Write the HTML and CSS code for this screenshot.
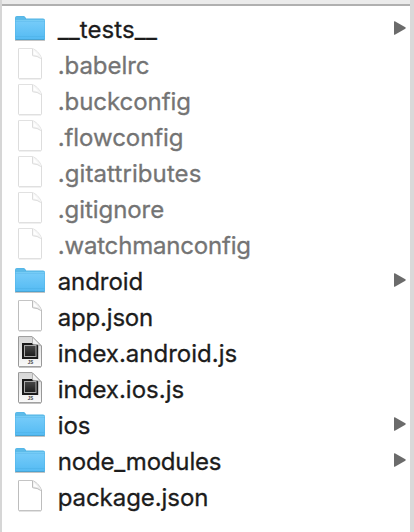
FILE: index.html
```
<!DOCTYPE html>
<html lang="en">
<head>
<meta charset="utf-8">
<title>Files</title>
<link rel="stylesheet" href="styles.css">
</head>
<body>
<svg width="0" height="0" class="defs">
  <defs>
    <linearGradient id="blue" x1="0" y1="0" x2="0" y2="1"><stop offset="0" stop-color="#75cbf9"/><stop offset="1" stop-color="#55bbf3"/></linearGradient>
    <linearGradient id="paper" x1="0" y1="0" x2="0" y2="1"><stop offset="0" stop-color="#d6d6d6"/><stop offset="1" stop-color="#fafafa"/></linearGradient>
    <linearGradient id="dark" x1="0" y1="0" x2="0" y2="1"><stop offset="0" stop-color="#484848"/><stop offset="1" stop-color="#1c1c1c"/></linearGradient>
    <symbol id="folder" viewBox="0 0 32 36">
      <path d="M1 28.500h30" stroke="#c4c4c4" stroke-width="1"/>
      <path d="M1 27V6q0-2 2-2h6.500q1 0 1.700 1l1 1.500H29q2 0 2 2V27q0 1-1 1H2q-1 0-1-1z" fill="#50b3e6"/>
      <path d="M1.500 8V6q0-1.500 1.500-1.500h6.500L11.500 7H29q1.500 0 1.500 1.500z" fill="#5dbbe9"/>
      <path d="M1.500 9.500h29V26q0 1-1 1h-27q-1 0-1-1z" fill="url(#blue)"/>
      <path d="M1.500 8.700h29" stroke="#8ad8fb" stroke-width=".8"/>
      <path d="M1.500 24.500h29" stroke="#4eb2e8" stroke-width=".6"/>
      <path d="M1.500 27.500h29" stroke="#48a3d2"/>
    </symbol>
    <symbol id="file" viewBox="0 2 32 36">
      <path d="M5 33.200h22" stroke="#ddd"/>
      <path d="M4.500 3q0-.6.600-.6H18q6 2 9.500 9.500v20q0 .7-.7.700H5.200q-.7 0-.7-.7z" fill="#fff" stroke="#bdbdbd"/>
      <path d="M18 2.500v7.500l9.500 2Q23.500 5 18 2.500z" fill="#eee"/>
      <path d="M18.500 3v6q0 .8.800.8 4 0 7.500 2.700" fill="none" stroke="#bbb"/>
      <path d="M19.700 8.500V4.500l4.500 4.700z" fill="#fff"/>
    </symbol>
    <symbol id="script" viewBox="0 2 32 36">
      <path d="M5 33.300h22" stroke="#bbb"/>
      <path d="M4.500 3q0-.6.600-.6H18l9.500 9.500v20q0 .7-.7.700H5.200q-.7 0-.7-.7z" fill="url(#paper)" stroke="#989898"/>
      <rect x="8" y="9" width="16.200" height="16" fill="#1b1b1b"/>
      <rect x="10.500" y="11.500" width="11.500" height="11" fill="url(#dark)" stroke="#aaa"/>
      <path d="M18.500 3v6.500q0 .8.800.8 4.500 0 7.700 1.500L18.500 3z" fill="#f2f2f2" stroke="#a8a8a8" stroke-width=".8"/>
      <text x="16.500" y="30.400" class="badge">JS</text>
    </symbol>
    <symbol id="arrow" viewBox="0 0 12 14"><path d="M0 .8Q0 0 .8.300L11.300 6.300q.8.700 0 1.400L.8 13.700Q0 14 0 13.200z" fill="#6b6b6b"/></symbol>
  </defs>
</svg>
<main class="column">
  <ul class="list">
    <li class="row"><svg class="icon"><use href="#folder"/></svg><span class="name wide">__tests__</span><svg class="arrow"><use href="#arrow"/></svg></li>
    <li class="row hidden"><svg class="icon"><use href="#file"/></svg><span class="name snug">.babelrc</span></li>
    <li class="row hidden"><svg class="icon"><use href="#file"/></svg><span class="name snug">.buckconfig</span></li>
    <li class="row hidden"><svg class="icon"><use href="#file"/></svg><span class="name snug">.flowconfig</span></li>
    <li class="row hidden"><svg class="icon"><use href="#file"/></svg><span class="name wide">.gitattributes</span></li>
    <li class="row hidden"><svg class="icon"><use href="#file"/></svg><span class="name snug">.gitignore</span></li>
    <li class="row hidden"><svg class="icon"><use href="#file"/></svg><span class="name tight">.watchmanconfig</span></li>
    <li class="row"><svg class="icon"><use href="#folder"/></svg><span class="name snug">android</span><svg class="arrow"><use href="#arrow"/></svg></li>
    <li class="row"><svg class="icon"><use href="#file"/></svg><span class="name tight">app.json</span></li>
    <li class="row"><svg class="icon"><use href="#script"/></svg><span class="name">index.android.js</span></li>
    <li class="row"><svg class="icon"><use href="#script"/></svg><span class="name">index.ios.js</span></li>
    <li class="row"><svg class="icon"><use href="#folder"/></svg><span class="name snug">ios</span><svg class="arrow"><use href="#arrow"/></svg></li>
    <li class="row"><svg class="icon"><use href="#folder"/></svg><span class="name tight">node_modules</span><svg class="arrow"><use href="#arrow"/></svg></li>
    <li class="row"><svg class="icon"><use href="#file"/></svg><span class="name snug">package.json</span></li>
  </ul>
</main>
</body>
</html>
```
FILE: styles.css
```
* { box-sizing: border-box; }
body { margin: 0; background: #fff; font-family: Inter, "Liberation Sans", sans-serif; }
.defs { display: block; }
.column {
  height: 532px;
  overflow: hidden;
  border-left: 2px solid #d6d6d6;
  border-right: 4px solid #d9d9d9;
  background: linear-gradient(#ebebeb 4px, #b0b0b0 4px, #b0b0b0 6px, #fff 6px);
}
.list { list-style: none; margin: 0; padding: 12px 4px 0 12px; }
.row { display: flex; align-items: center; height: 36px; color: #1c1c1c; }
.icon { flex: none; width: 32px; height: 36px; }
.name {
  margin-left: 11.700px;
  font-size: 24px;
  line-height: 36px;
  white-space: nowrap;
  -webkit-text-stroke: .3px currentColor;
}
.wide { letter-spacing: .1px; }
.snug { letter-spacing: -.06px; }
.tight { letter-spacing: -.18px; }
.hidden { color: #747474; }
.hidden .icon { opacity: .5; }
.arrow { width: 12px; height: 14px; margin: 0 0 4px auto; }
.badge { font: bold 4.500px "Liberation Sans", sans-serif; text-anchor: middle; fill: #444; }
```
